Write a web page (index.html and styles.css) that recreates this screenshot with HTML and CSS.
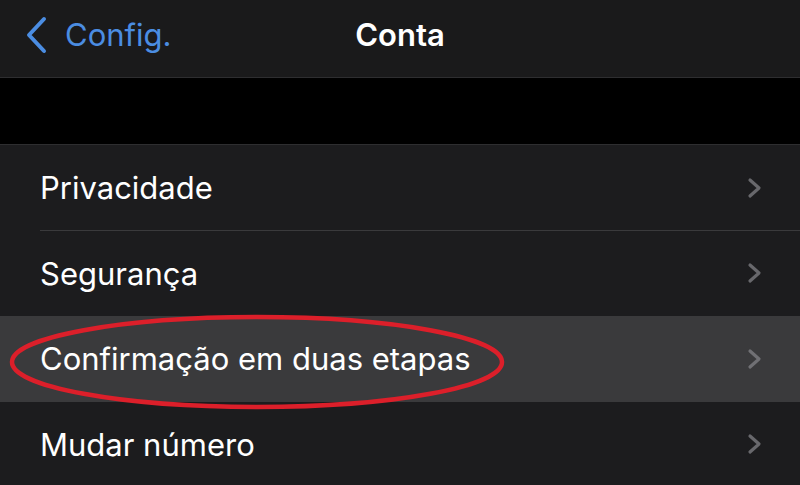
FILE: index.html
```html
<!DOCTYPE html>
<html lang="pt">
<head>
	<meta charset="UTF-8">
	<title>Conta</title>
	<link rel="stylesheet" href="styles.css">
</head>
<body>
<div class="screen">
	<div class="navbar">
		<div class="back">
			<svg class="back-icon" width="24" height="38" viewBox="0 0 24 38">
				<path d="M20 3 L5 19 L20 35" fill="none" stroke="#4b8de2" stroke-width="4" stroke-linecap="round" stroke-linejoin="round"/>
			</svg>
			<span>Config.</span>
		</div>
		<div class="title">Conta</div>
	</div>
	<div class="gap"></div>
	<ul class="list">
		<li class="row"><span>Privacidade</span><svg class="chev" width="18" height="24" viewBox="0 0 18 24"><path d="M4 4 L13 12 L4 20" fill="none" stroke="#68686c" stroke-width="3.2" stroke-linecap="round" stroke-linejoin="round"/></svg></li>
		<li class="row"><span>Segurança</span><svg class="chev" width="18" height="24" viewBox="0 0 18 24"><path d="M4 4 L13 12 L4 20" fill="none" stroke="#68686c" stroke-width="3.2" stroke-linecap="round" stroke-linejoin="round"/></svg></li>
		<li class="row selected"><span>Confirmação em duas etapas</span><svg class="chev" width="18" height="24" viewBox="0 0 18 24"><path d="M4 4 L13 12 L4 20" fill="none" stroke="#707074" stroke-width="3.2" stroke-linecap="round" stroke-linejoin="round"/></svg></li>
		<li class="row"><span>Mudar número</span><svg class="chev" width="18" height="24" viewBox="0 0 18 24"><path d="M4 4 L13 12 L4 20" fill="none" stroke="#68686c" stroke-width="3.2" stroke-linecap="round" stroke-linejoin="round"/></svg></li>
	</ul>
	<svg class="mark" width="504" height="100" viewBox="0 0 504 100">
		<ellipse cx="251" cy="50" rx="245" ry="45" fill="none" stroke="#dc1f2a" stroke-width="4.5"/>
	</svg>
</div>
</body>
</html>
```
FILE: styles.css
```css
*{
	margin: 0;
	padding: 0;
	box-sizing: border-box;
}
body{
	background: #000;
	font-family: Inter, "Liberation Sans", sans-serif;
	color: #fff;
}
.screen{
	width: 800px;
	height: 485px;
	overflow: hidden;
	position: relative;
}
.navbar{
	height: 78px;
	padding-bottom: 8px;
	background: #1a1a1b;
	border-bottom: 1px solid #2e2e30;
	position: relative;
	display: flex;
	align-items: center;
}
.back{
	display: flex;
	align-items: center;
	gap: 17px;
	padding-left: 24px;
	color: #4b8de2;
	font-size: 31px;
}
.title{
	position: absolute;
	left: 0;
	right: 0;
	top: 0;
	bottom: 8px;
	display: flex;
	align-items: center;
	justify-content: center;
	font-weight: 600;
	font-size: 31px;
}
.gap{
	height: 67px;
	background: #000;
	border-bottom: 1px solid #2e2e30;
}
.list{
	list-style: none;
	background: #1c1c1e;
}
.row{
	height: 85.5px;
	display: flex;
	align-items: center;
	justify-content: space-between;
	padding: 0 36px 0 40px;
	font-size: 31px;
	position: relative;
}
.row:first-child::after{
	content: "";
	position: absolute;
	left: 40px;
	right: 0;
	bottom: 0;
	border-bottom: 1px solid #3a3a3c;
}
.selected{
	background: #3a3a3c;
}
.mark{
	position: absolute;
	left: 6px;
	top: 312px;
}
```
